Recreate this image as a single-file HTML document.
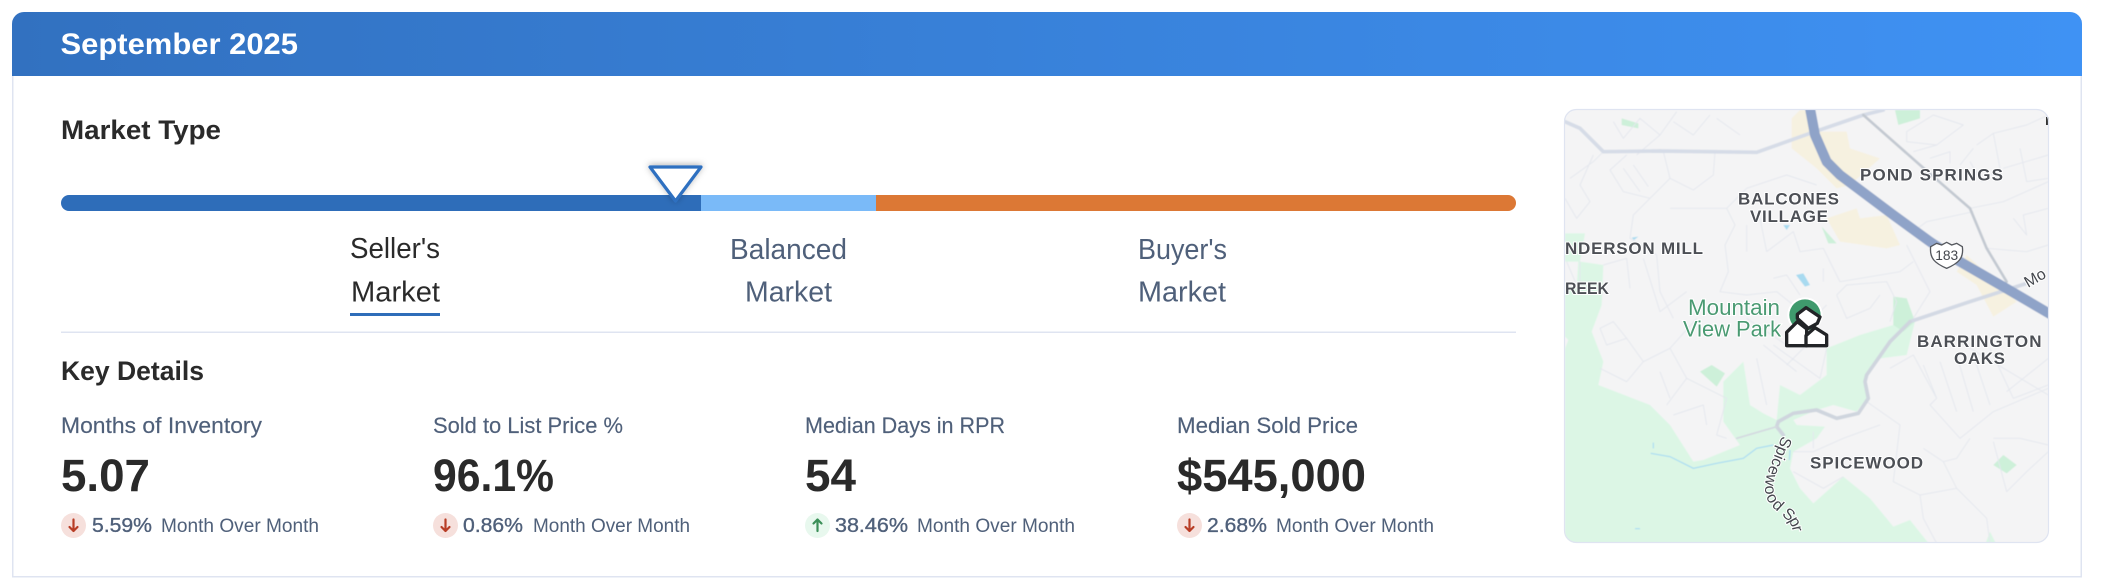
<!DOCTYPE html>
<html lang="en">
<head>
<meta charset="utf-8">
<title>September 2025</title>
<style>
html,body{margin:0;padding:0;background:#fff;width:2102px;height:588px;overflow:hidden}
svg{display:block}
text{font-family:"Liberation Sans",sans-serif}
.h{font-weight:700;fill:#2a2a2a;font-size:27px}
.l{fill:#50607a;font-size:22.5px;stroke:#50607a;stroke-width:.15px}
.v{font-weight:700;fill:#2a2a2a;font-size:45px}
.p{fill:#50607a;font-size:20px;stroke:#50607a;stroke-width:.35px}
.m{fill:#50607a;font-size:19.5px}
.t{font-size:28.5px;fill:#50607a}
.lab{font-weight:700;font-size:17px;fill:#4c4f55;stroke:#fff;stroke-width:2px;paint-order:stroke;stroke-linejoin:round}
.park{font-size:22px;fill:#4a9a72;stroke:#fff;stroke-width:2px;paint-order:stroke}
</style>
</head>
<body>
<svg width="2102" height="588" viewBox="0 0 2102 588" xmlns="http://www.w3.org/2000/svg">
<defs>
<linearGradient id="hg" x1="0" y1="0" x2="1" y2="0">
<stop offset="0" stop-color="#3271c0"/><stop offset="1" stop-color="#3f92f4"/>
</linearGradient>
<clipPath id="bar"><rect x="61" y="195" width="1455" height="16" rx="8"/></clipPath>
<clipPath id="map"><rect x="1564" y="109" width="485" height="434" rx="12"/></clipPath>
<filter id="sh" x="-40%" y="-40%" width="180%" height="180%"><feDropShadow dx="0" dy="-1" stdDeviation="3.5" flood-color="#000" flood-opacity=".3"/></filter>
<filter id="soft" x="-2%" y="-2%" width="104%" height="104%"><feGaussianBlur stdDeviation=".6"/></filter>
<filter id="tsoft" x="-2%" y="-2%" width="104%" height="104%"><feGaussianBlur stdDeviation=".3"/></filter>
</defs>

<path d="M12.750 20V576.750H2081.250V20" fill="#fff" stroke="#dfe4f1" stroke-width="1.5"/>
<path d="M12 76V24a12 12 0 0 1 12-12H2070a12 12 0 0 1 12 12V76Z" fill="url(#hg)"/>

<g filter="url(#tsoft)">
<text x="60.500" y="54" font-size="30" font-weight="700" fill="#fff" textLength="237.500" lengthAdjust="spacingAndGlyphs">September 2025</text>
<text class="h" x="61" y="139" textLength="160" lengthAdjust="spacingAndGlyphs">Market Type</text>
</g>

<g clip-path="url(#bar)">
<rect x="61" y="195" width="640" height="16" fill="#2e6db9"/>
<rect x="701" y="195" width="175" height="16" fill="#7abaf8"/>
<rect x="876" y="195" width="640" height="16" fill="#dc7835"/>
</g>
<path d="M650 167H701L675.500 201Z" fill="#fff" stroke="#2e6fc0" stroke-width="3.2" stroke-linejoin="round" filter="url(#sh)"/>

<g filter="url(#tsoft)">
<text class="t" style="fill:#2a2a2a" x="350" y="258" textLength="90" lengthAdjust="spacingAndGlyphs">Seller's</text>
<text class="t" style="fill:#2a2a2a" x="351" y="301.500" textLength="89" lengthAdjust="spacingAndGlyphs">Market</text>
<text class="t" x="730" y="259" textLength="117" lengthAdjust="spacingAndGlyphs">Balanced</text>
<text class="t" x="745" y="301.500" textLength="87" lengthAdjust="spacingAndGlyphs">Market</text>
<text class="t" x="1138" y="259" textLength="89" lengthAdjust="spacingAndGlyphs">Buyer's</text>
<text class="t" x="1138" y="301.500" textLength="88" lengthAdjust="spacingAndGlyphs">Market</text>
</g>
<rect x="350" y="313" width="90" height="3" fill="#2e6db9"/>
<rect x="61" y="331.500" width="1455" height="1.500" fill="#dfe4f1"/>

<g filter="url(#tsoft)">
<text class="h" x="61" y="380" textLength="143" lengthAdjust="spacingAndGlyphs">Key Details</text>

<text class="l" x="61" y="433" textLength="201" lengthAdjust="spacingAndGlyphs">Months of Inventory</text>
<text class="l" x="433" y="433" textLength="190" lengthAdjust="spacingAndGlyphs">Sold to List Price %</text>
<text class="l" x="805" y="433" textLength="200" lengthAdjust="spacingAndGlyphs">Median Days in RPR</text>
<text class="l" x="1177" y="433" textLength="181" lengthAdjust="spacingAndGlyphs">Median Sold Price</text>

<text class="v" x="61" y="491" textLength="89" lengthAdjust="spacingAndGlyphs">5.07</text>
<text class="v" x="433" y="491" textLength="121" lengthAdjust="spacingAndGlyphs">96.1%</text>
<text class="v" x="805" y="491" textLength="51" lengthAdjust="spacingAndGlyphs">54</text>
<text class="v" x="1177" y="491" textLength="189" lengthAdjust="spacingAndGlyphs">$545,000</text>

<text class="p" x="92" y="532" textLength="60" lengthAdjust="spacingAndGlyphs">5.59%</text>
<text class="m" x="161" y="532" textLength="158" lengthAdjust="spacingAndGlyphs">Month Over Month</text>
<text class="p" x="463" y="532" textLength="60" lengthAdjust="spacingAndGlyphs">0.86%</text>
<text class="m" x="533" y="532" textLength="157" lengthAdjust="spacingAndGlyphs">Month Over Month</text>
<text class="p" x="835" y="532" textLength="73" lengthAdjust="spacingAndGlyphs">38.46%</text>
<text class="m" x="917" y="532" textLength="158" lengthAdjust="spacingAndGlyphs">Month Over Month</text>
<text class="p" x="1207" y="532" textLength="60" lengthAdjust="spacingAndGlyphs">2.68%</text>
<text class="m" x="1276" y="532" textLength="158" lengthAdjust="spacingAndGlyphs">Month Over Month</text>
</g>

<g fill="none" stroke-width="2.200" stroke-linecap="round" stroke-linejoin="round">
<circle cx="73.500" cy="525.500" r="12.500" fill="#f6e0dc"/>
<path d="M73.500 519.500V531M69.500 527L73.500 531L77.500 527" stroke="#b83d26"/>
<circle cx="445.500" cy="525.500" r="12.500" fill="#f6e0dc"/>
<path d="M445.500 519.500V531M441.500 527L445.500 531L449.500 527" stroke="#b83d26"/>
<circle cx="817.500" cy="525.500" r="12.500" fill="#e8f8ee"/>
<path d="M817.500 531V519.500M813.500 523.500L817.500 519.500L821.500 523.500" stroke="#3b8f58"/>
<circle cx="1189.500" cy="525.500" r="12.500" fill="#f6e0dc"/>
<path d="M1189.500 519.500V531M1185.500 527L1189.500 531L1193.500 527" stroke="#b83d26"/>
</g>

<!-- MAP -->
<g clip-path="url(#map)">
<g filter="url(#soft)">
<rect x="1564" y="109" width="485" height="434" fill="#f4f4f5"/>
<g transform="translate(1560,105) scale(.33333)">
<!-- beige -->
<g fill="#f6f1e0">
<path d="M695 40L720 15L745 15L770 80L860 80L870 130L960 160L870 240L830 250L770 190L695 130Z"/>
<path d="M800 340L890 310L900 340L980 330L1020 420L980 430L840 410Z"/>
<path d="M1190 500L1220 450L1370 590L1300 635L1250 540Z"/>
</g>
<!-- green -->
<path d="M15 385L75 385L60 470L130 480L125 600L95 680L130 770L115 840L270 900L330 960L400 1070L430 1065L540 1020L490 950L490 830L550 770L570 900L610 925L650 945L660 840L720 870L800 810L800 730L900 690L1000 660L1000 575L1040 580L1065 650L1040 750L960 760L920 810L920 880L890 920L820 900L770 915L700 945L710 960L795 965L770 1000L700 1040L690 1090L720 1150L760 1195L850 1115L930 1180L1000 1265L1050 1245L1110 1320L1275 1320L1290 1280L1310 1320L15 1320Z" fill="#dcf6e5"/>
<path d="M15 470H55L50 545H15Z" fill="#f4f4f5"/>
<path d="M15 695L25 705L15 730Z" fill="#f4f4f5"/>
<g fill="#cdf0d9">
<path d="M1005 15H1080L1080 40L1015 60Z"/>
<path d="M185 40L235 55L235 70L185 60Z"/>
<path d="M785 365L830 415L805 415Z"/>
<path d="M420 800L455 780L495 805L470 845Z"/>
<path d="M1300 1080L1330 1050L1370 1080L1340 1105Z"/>
<path d="M1000 575L1040 580L1065 650L1030 680L1000 660Z"/>
</g>
<!-- water -->
<g fill="#a8daf0">
<path d="M708 510L730 505L750 540L735 545Z"/>
<path d="M215 398L235 395L222 405Z"/>
<path d="M670 360H690L680 375Z"/>
</g>
<path d="M272 1045L330 1055L400 1090L470 1075L550 1060L590 1030L640 1020M280 1013V1030M225 1271H240M690 1035L688 1065" fill="none" stroke="#a8dcf2" stroke-width="3.500"/>
<!-- minor roads -->
<path fill="none" stroke="#e4e7ee" stroke-width="2.800" stroke-linejoin="round" d="M15 280L50 340L90 290L60 240L100 150M130 140L100 170L30 220M160 50L190 100L240 40L300 90L230 150M300 90L350 20M340 50L400 90L450 30M470 40L540 90M310 140L330 220L270 280L190 260L150 195L200 150M190 190L240 260M220 180L265 245M330 220L400 255L460 210L465 140M270 280L220 330L210 400L290 450L300 560L340 640M330 310H500L525 360L495 420L505 500L480 560L560 570L650 560L700 600M500 310L560 250L680 210L770 240M560 360V440M600 340L620 440M620 440L700 380L720 440L790 430L840 530L1020 500L1060 470M640 520L680 510L720 570M790 490V530M1040 80L1120 30L1210 60L1130 120L1040 110ZM1060 140L1130 120M1110 160L1170 140L1170 175M1240 130L1200 180M1250 120L1300 85L1400 60L1465 30M1300 85L1320 190L1265 230L1230 170M1330 190L1465 150M1380 130L1400 230L1465 220M1230 310L1330 290L1465 230M1360 340L1400 390L1390 330L1465 310M1240 320L1100 350L1060 380M1280 430L1400 440L1465 420M830 570L860 540L980 530L1010 590L990 650M830 570L860 640L930 610L960 570M1040 420L1110 560L1060 640M130 480L200 460L210 550M250 460L300 620L380 560M60 470V540M20 470L50 540M120 670L160 650L200 700L140 720ZM200 700L250 770L200 830L120 790M250 770L330 730L410 640M330 730L380 820L320 900M300 800L330 880M380 820L500 880L470 990L500 1000M340 930L430 900L440 960M590 760L620 900M640 720L780 820L800 730M610 720L710 800M680 780L740 720M560 640L680 720M680 720L800 600M990 790L1060 750L1130 880L1110 900L1200 1000L1300 920L1465 850M1090 780L1130 880M1140 770L1190 920M1190 750L1240 920M1240 750L1290 900M1290 730L1360 880L1465 840M1340 860L1465 760M1180 700L1465 870M920 890L1020 960L1000 1130L1080 1170L1190 1150L1150 1070L1090 1030M1080 1170L1090 1240L1130 1315M1190 1150L1280 1240L1290 1315M1230 1000L1190 1060L1150 1070M1300 1010L1340 1160L1400 1100L1465 1040M1300 1000L1380 1000L1465 1020M700 1100L790 1150L850 1115M760 980V1030M700 1040L760 1040L850 1000L960 960"/>
<!-- arterials -->
<g fill="none" stroke-linecap="round" stroke-linejoin="round">
<path d="M15 50L60 70L130 140L300 138L590 142L750 85L910 30L970 15" stroke="#d6dce7" stroke-width="11"/>
<path d="M910 30L1080 180L1230 310L1280 430L1340 530" stroke="#c3c9d1" stroke-width="8"/>
<path d="M1050 650L1230 590L1400 535" stroke="#d3d9e4" stroke-width="11"/>
<path d="M1050 650L990 710L920 810L915 830L925 880L895 925L830 940L770 915L700 925L655 950L650 965L670 990" stroke="#cfd5de" stroke-width="11"/>
<path d="M650 965L530 1000" stroke="#d4d9e0" stroke-width="5"/>
<path d="M750 10L765 90L800 170L840 210L1000 330L1110 410L1200 470L1330 545L1475 630" stroke="#8fa3c8" stroke-width="30"/>
</g>
</g>
</g>

<text class="lab" x="1860" y="180.300" textLength="143" lengthAdjust="spacing">POND SPRINGS</text>
<text class="lab" x="1738" y="204.300" textLength="101" lengthAdjust="spacing">BALCONES</text>
<text class="lab" x="1750" y="222" textLength="78" lengthAdjust="spacing">VILLAGE</text>
<text class="lab" x="1565" y="254" textLength="138" lengthAdjust="spacing">NDERSON MILL</text>
<text class="lab" x="1565" y="294" textLength="44" lengthAdjust="spacingAndGlyphs">REEK</text>
<text class="lab" x="1917" y="347" textLength="124.500" lengthAdjust="spacing">BARRINGTON</text>
<text class="lab" x="1954" y="364" textLength="51" lengthAdjust="spacing">OAKS</text>
<text class="lab" x="1810" y="468.300" textLength="113" lengthAdjust="spacing">SPICEWOOD</text>
<text class="park" x="1688" y="315" textLength="92" lengthAdjust="spacingAndGlyphs">Mountain</text>
<text class="park" x="1683" y="336.700" textLength="98" lengthAdjust="spacingAndGlyphs">View Park</text>

<g transform="translate(1560,105) scale(.33333)">
<path d="M1112 425L1130 415L1145 420L1160 412L1175 420L1190 415L1207 425C1212 460 1195 475 1160 490C1125 475 1108 460 1112 425Z" fill="#fff" stroke="#55585e" stroke-width="4"/>
</g>
<text x="1946.700" y="260" font-size="14" fill="#44474d" text-anchor="middle" textLength="23" lengthAdjust="spacingAndGlyphs">183</text>
<text x="0" y="0" font-size="16" fill="#44474d" stroke="#fff" stroke-width="2" paint-order="stroke" transform="translate(2028,288) rotate(-30)">Mo</text>
<rect x="2046" y="117" width="3" height="8" fill="#333"/>

<path id="sp" d="M1786 437L1774 467Q1764 490 1774 503Q1786 514 1790 517Q1797 524 1797 535L1797 560" fill="none"/>
<text font-size="16" fill="#44474d" stroke="#fff" stroke-width="2" paint-order="stroke" dominant-baseline="middle"><textPath href="#sp" startOffset="0">Spicewood Spr</textPath></text>

<g transform="translate(1560,105) scale(.33333)">
<circle cx="735" cy="630" r="53" fill="#fff"/>
<circle cx="735" cy="630" r="47" fill="#3f9a6d"/>
<g fill="#fff" stroke="#222427" stroke-width="10" stroke-linejoin="round">
<path d="M738 608L780 636L772 655L745 670L712 640L712 628Z"/>
<path d="M680 682L712 650L740 672V722H680Z"/>
<path d="M738 722V692L765 668L800 690V722Z"/>
</g>
</g>
</g>
<rect x="1564.500" y="109.500" width="484" height="433" rx="12" fill="none" stroke="#dfe4f1" stroke-width="1.200"/>
</svg>
</body>
</html>
